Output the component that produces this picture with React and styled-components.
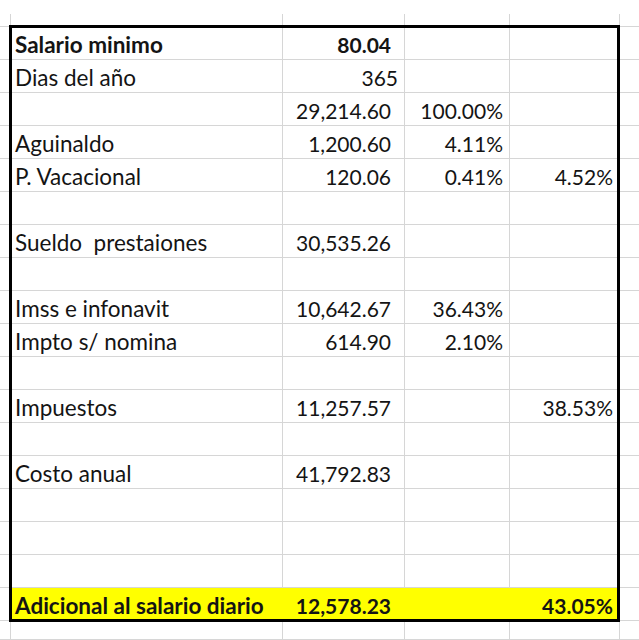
import React from "react";
import styled, { createGlobalStyle, css } from "styled-components";

const GlobalStyle = createGlobalStyle`
  html, body {
    margin: 0;
    padding: 0;
    background: #fff;
    overflow: hidden;
  }
  body {
    font-family: Lato, "Liberation Sans", sans-serif;
  }
`;

const Page = styled.div`
  width: 639px;
  height: 640px;
  padding-top: 14px;
  box-sizing: border-box;
  overflow: hidden;
`;

// sheet and frame layer share one grid area so the frame sits over the cells
const Stack = styled.div`
  display: grid;
  & > * {
    grid-area: 1 / 1;
  }
`;

const sheetGrid = css`
  display: grid;
  grid-template-columns: 11px 272px 122px 105px 110px 19px;
  grid-template-rows: 13px repeat(18, 33px) 19px;
`;

const Sheet = styled.div`
  ${sheetGrid}
`;

const FrameLayer = styled.div`
  ${sheetGrid}
  pointer-events: none;
  z-index: 1;
`;

const Frame = styled.div`
  grid-row: 2 / 20;
  grid-column: 2 / 6;
  margin: -2px 0 -1px -2px;
  border: 3px solid #000;
`;

const Cell = styled.div`
  box-sizing: border-box;
  border-right: 1px solid #d6d6d6;
  border-bottom: 1px solid #d6d6d6;
  display: flex;
  align-items: flex-end;
  justify-content: ${(p) => (p.$align === "right" ? "flex-end" : "flex-start")};
  padding: 0 ${(p) => (p.$acct ? "13px" : "6px")} 2px 4px;
  font-size: ${(p) => (p.$label ? "22.5px" : "21px")};
  line-height: 24px;
  color: #141414;
  white-space: nowrap;
  font-weight: ${(p) => (p.$bold ? 700 : 400)};

  ${(p) =>
    p.$last &&
    css`
      border-right: none;
    `}

  ${(p) =>
    p.$highlight &&
    css`
      background: #ffff00;
      border-right-color: #ffff00;
    `}
`;

const rows = [
  { label: "Salario minimo", c: "80.04", bold: true, acct: true },
  { label: "Dias del año", c: "365" },
  { label: "", c: "29,214.60", d: "100.00%", acct: true },
  { label: "Aguinaldo", c: "1,200.60", d: "4.11%", acct: true },
  { label: "P. Vacacional", c: "120.06", d: "0.41%", e: "4.52%", acct: true },
  {},
  { label: "Sueldo\u00a0 prestaiones", c: "30,535.26", acct: true },
  {},
  { label: "Imss e infonavit", c: "10,642.67", d: "36.43%", acct: true },
  { label: "Impto s/ nomina", c: "614.90", d: "2.10%", acct: true },
  {},
  { label: "Impuestos", c: "11,257.57", e: "38.53%", acct: true },
  {},
  { label: "Costo anual", c: "41,792.83", acct: true },
  {},
  {},
  {},
  {
    label: "Adicional al salario diario",
    c: "12,578.23",
    e: "43.05%",
    acct: true,
    bold: true,
    highlight: true,
  },
];

const EmptyRow = () => (
  <>
    <Cell />
    <Cell />
    <Cell />
    <Cell />
    <Cell />
    <Cell $last />
  </>
);

export default function App() {
  return (
    <Page>
      <GlobalStyle />
      <Stack>
        <Sheet>
          <EmptyRow />
          {rows.map((r, i) => (
            <React.Fragment key={i}>
              <Cell />
              <Cell $label $bold={r.bold} $highlight={r.highlight}>
                {r.label}
              </Cell>
              <Cell
                $align="right"
                $acct={r.acct}
                $bold={r.bold}
                $highlight={r.highlight}
              >
                {r.c}
              </Cell>
              <Cell $align="right" $highlight={r.highlight}>
                {r.d}
              </Cell>
              <Cell $align="right" $bold={r.bold} $highlight={r.highlight}>
                {r.e}
              </Cell>
              <Cell $last />
            </React.Fragment>
          ))}
          <EmptyRow />
        </Sheet>
        <FrameLayer>
          <Frame />
        </FrameLayer>
      </Stack>
    </Page>
  );
}
